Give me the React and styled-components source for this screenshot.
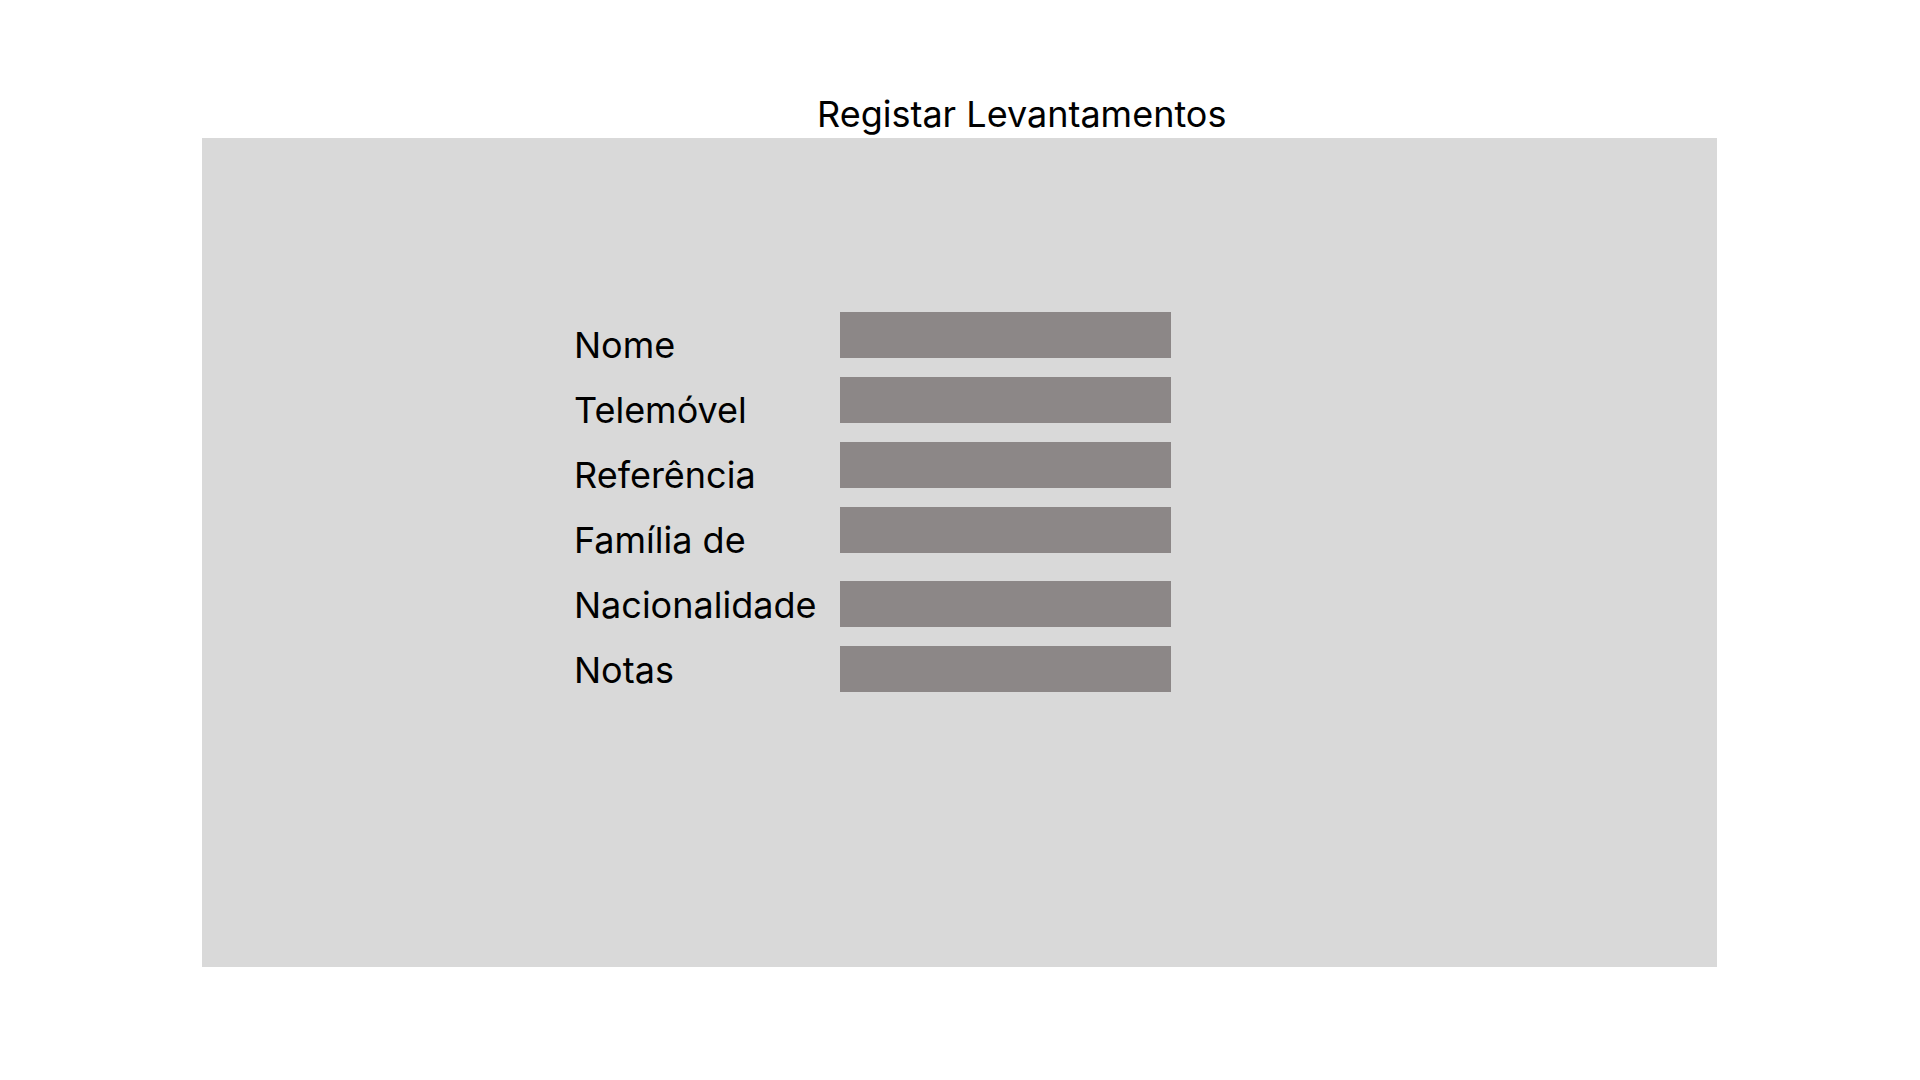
import React from 'react';
import styled, { createGlobalStyle } from 'styled-components';

const GlobalStyle = createGlobalStyle`
  body {
    margin: 0;
    background: #ffffff;
    font-family: Inter, "Noto Sans", sans-serif;
    color: #000000;
  }
`;

const Page = styled.div`
  width: 1920px;
  height: 1080px;
  padding-top: 90px;
  box-sizing: border-box;
`;

const Title = styled.h1`
  margin: 0 0 0 817px;
  height: 48px;
  font-size: 36px;
  font-weight: 400;
  line-height: 48px;
`;

const Panel = styled.div`
  margin-left: 202px;
  width: 1515px;
  height: 829px;
  background: #d9d9d9;
  padding: 175px 0 0 372px;
  box-sizing: border-box;
  display: flex;
`;

const LabelColumn = styled.div`
  width: 266px;
  display: flex;
  flex-direction: column;
`;

const Label = styled.span`
  font-size: 36px;
  line-height: 65px;
  white-space: nowrap;
`;

const FieldColumn = styled.div`
  display: flex;
  flex-direction: column;
  gap: 19px;
  margin-top: -1px;
`;

const Field = styled.div`
  width: 331px;
  height: 46px;
  background: #8c8787;
  margin-top: ${(p) => (p.$shift ? '9px' : '0')};
`;

const labels = ['Nome', 'Telemóvel', 'Referência', 'Família de', 'Nacionalidade', 'Notas'];

export default function App() {
  return (
    <Page>
      <GlobalStyle />
      <Title>Registar Levantamentos</Title>
      <Panel>
        <LabelColumn>
          {labels.map((l) => (
            <Label key={l}>{l}</Label>
          ))}
        </LabelColumn>
        <FieldColumn>
          {labels.map((l, i) => (
            <Field key={l} $shift={i === 4} />
          ))}
        </FieldColumn>
      </Panel>
    </Page>
  );
}
